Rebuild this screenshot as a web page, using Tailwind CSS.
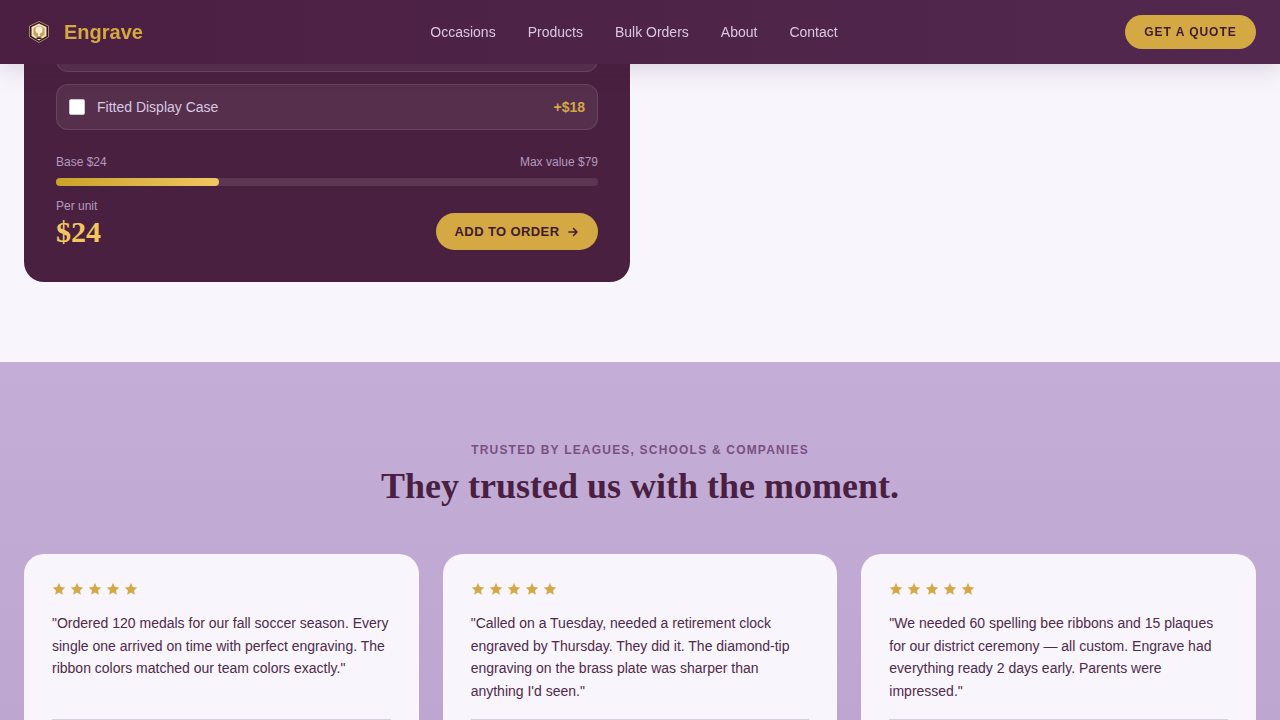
<!DOCTYPE html>
<html lang="en">
<head>
  <meta charset="UTF-8" />
  <title>Engrave</title>
  <script src="https://cdn.jsdelivr.net/npm/@tailwindcss/browser@4"></script>
</head>
<body class="h-screen overflow-hidden bg-[#f8f5fc] font-['Liberation_Sans',sans-serif]">
  <!-- Nav -->
  <header class="fixed top-0 left-0 z-50 w-full h-16 flex items-center justify-between px-6 bg-gradient-to-r from-[#4a1f42] to-[#52284f] shadow-[0_4px_24px_rgba(74,31,66,0.18)]">
    <div class="flex items-center gap-[10px]">
      <svg class="w-[30px] h-[30px]" viewBox="0 0 30 30" fill="none">
        <path d="M15 4.500 L24.500 9 V20 L15 25.500 L5.500 20 V9 Z" fill="#2f1626" stroke="#a98a5c" stroke-width="1"/>
        <path d="M15 6.500 L22.500 10 V19 L15 23.500 L7.500 19 V10 Z" fill="#f2e4c4"/>
        <path d="M15 8.500 L20.500 11 V18 L15 21.500 L9.500 18 V11 Z" fill="#c9a25a"/>
        <circle cx="15" cy="13" r="3.500" fill="#f7edd4"/>
        <path d="M14 15h2v4h-2z" fill="#f7edd4"/>
        <path d="M12.500 20.500h5v1.500h-5z" fill="#2f1626"/>
      </svg>
      <span class="text-[20px] font-bold text-[#d4a843]">Engrave</span>
    </div>
    <nav class="flex items-center gap-8 text-[14px] text-[#d9c9e0]">
      <a>Occasions</a>
      <a>Products</a>
      <a>Bulk Orders</a>
      <a>About</a>
      <a>Contact</a>
    </nav>
    <button class="w-[131px] h-[34px] rounded-full bg-[#d4a843] text-[12px] font-bold tracking-[0.08em] text-[#3f1a2e]">GET A QUOTE</button>
  </header>

  <!-- Configurator -->
  <section class="h-[362px] px-6">
    <div class="w-[606px] h-[282px] pt-[26px] px-8 bg-[#4a2040] rounded-b-[20px]">
      <div class="h-[46px] rounded-xl bg-white/[0.07] border border-white/10"></div>
      <label class="mt-3 h-[46px] px-3 flex items-center justify-between rounded-xl bg-white/[0.07] border border-white/10">
        <span class="flex items-center gap-3 text-[14px] text-[#d9c9e0]">
          <span class="w-4 h-4 bg-white rounded-[2px] border border-[#cfc6d4]"></span>
          Fitted Display Case
        </span>
        <span class="text-[14px] font-bold text-[#d4a843]">+$18</span>
      </label>
      <div class="mt-[23px] flex justify-between text-[12px] text-[#b39bbf]">
        <span>Base $24</span>
        <span>Max value $79</span>
      </div>
      <div class="mt-[7px] h-2 rounded-full bg-white/10">
        <div class="h-2 w-[163px] rounded-full bg-gradient-to-r from-[#c9a227] to-[#f0c860]"></div>
      </div>
      <div class="mt-[11px] flex items-end justify-between">
        <div>
          <div class="text-[12px] text-[#b39bbf]">Per unit</div>
          <div class="font-['Liberation_Serif',serif] text-[30px] leading-[33px] pb-[2px] font-bold text-[#f0c860]">$24</div>
        </div>
        <button class="w-[162px] h-[37px] flex items-center justify-center gap-2 rounded-full bg-[#d4a843] text-[13px] font-bold tracking-[0.03em] text-[#3f1a2e]">
          ADD TO ORDER
          <svg class="w-3 h-3" viewBox="0 0 24 24" fill="none" stroke="currentColor" stroke-width="3" stroke-linecap="round" stroke-linejoin="round"><path d="M4 12h16M13 5l7 7-7 7"/></svg>
        </button>
      </div>
    </div>
  </section>

  <!-- Testimonials -->
  <section class="h-[358px] px-6 pt-20 bg-gradient-to-b from-[#c4aed8] to-[#bda7d1]">
    <div class="text-center">
      <div class="text-[12px] leading-4 font-bold tracking-[0.1em] text-[#7a4f80]">TRUSTED BY LEAGUES, SCHOOLS &amp; COMPANIES</div>
      <h2 class="mt-[6px] font-['Liberation_Serif',serif] text-[36px] leading-[44px] font-bold text-[#4a1f42]">They trusted us with the moment.</h2>
    </div>
    <div class="mt-[46px] grid grid-cols-3 gap-6">
      <article class="h-[240px] px-7 pt-7 rounded-[20px] bg-[#f8f5fc]">
        <div class="flex gap-1 text-[#d4a843]">
          <svg class="w-[14px] h-[14px]" viewBox="0 0 24 24" fill="currentColor"><path d="M12 1.500l3.200 6.900 7.500.9-5.600 5.100 1.500 7.400L12 18.100l-6.600 3.700 1.500-7.400L1.300 9.300l7.500-.9z"/></svg>
          <svg class="w-[14px] h-[14px]" viewBox="0 0 24 24" fill="currentColor"><path d="M12 1.500l3.200 6.900 7.500.9-5.600 5.100 1.500 7.400L12 18.100l-6.600 3.700 1.500-7.400L1.300 9.300l7.500-.9z"/></svg>
          <svg class="w-[14px] h-[14px]" viewBox="0 0 24 24" fill="currentColor"><path d="M12 1.500l3.200 6.900 7.500.9-5.600 5.100 1.500 7.400L12 18.100l-6.600 3.700 1.500-7.400L1.300 9.300l7.500-.9z"/></svg>
          <svg class="w-[14px] h-[14px]" viewBox="0 0 24 24" fill="currentColor"><path d="M12 1.500l3.200 6.900 7.500.9-5.600 5.100 1.500 7.400L12 18.100l-6.600 3.700 1.500-7.400L1.300 9.300l7.500-.9z"/></svg>
          <svg class="w-[14px] h-[14px]" viewBox="0 0 24 24" fill="currentColor"><path d="M12 1.500l3.200 6.900 7.500.9-5.600 5.100 1.500 7.400L12 18.100l-6.600 3.700 1.500-7.400L1.300 9.300l7.500-.9z"/></svg>
        </div>
        <p class="mt-4 h-[90px] text-[14px] leading-[22.6px] text-[#4f2a4a]">"Ordered 120 medals for our fall soccer season. Every single one arrived on time with perfect engraving. The ribbon colors matched our team colors exactly."</p>
        <div class="mt-[17px] border-t border-[#d9cfe2]"></div>
      </article>
      <article class="h-[240px] px-7 pt-7 rounded-[20px] bg-[#f8f5fc]">
        <div class="flex gap-1 text-[#d4a843]">
          <svg class="w-[14px] h-[14px]" viewBox="0 0 24 24" fill="currentColor"><path d="M12 1.500l3.200 6.900 7.500.9-5.600 5.100 1.500 7.400L12 18.100l-6.600 3.700 1.500-7.400L1.300 9.300l7.500-.9z"/></svg>
          <svg class="w-[14px] h-[14px]" viewBox="0 0 24 24" fill="currentColor"><path d="M12 1.500l3.200 6.900 7.500.9-5.600 5.100 1.500 7.400L12 18.100l-6.600 3.700 1.500-7.400L1.300 9.300l7.500-.9z"/></svg>
          <svg class="w-[14px] h-[14px]" viewBox="0 0 24 24" fill="currentColor"><path d="M12 1.500l3.200 6.900 7.500.9-5.600 5.100 1.500 7.400L12 18.100l-6.600 3.700 1.500-7.400L1.300 9.300l7.500-.9z"/></svg>
          <svg class="w-[14px] h-[14px]" viewBox="0 0 24 24" fill="currentColor"><path d="M12 1.500l3.200 6.900 7.500.9-5.600 5.100 1.500 7.400L12 18.100l-6.600 3.700 1.500-7.400L1.300 9.300l7.500-.9z"/></svg>
          <svg class="w-[14px] h-[14px]" viewBox="0 0 24 24" fill="currentColor"><path d="M12 1.500l3.200 6.900 7.500.9-5.600 5.100 1.500 7.400L12 18.100l-6.600 3.700 1.500-7.400L1.300 9.300l7.500-.9z"/></svg>
        </div>
        <p class="mt-4 h-[90px] text-[14px] leading-[22.6px] text-[#4f2a4a]">"Called on a Tuesday, needed a retirement clock engraved by Thursday. They did it. The diamond-tip engraving on the brass plate was sharper than anything I'd seen."</p>
        <div class="mt-[17px] border-t border-[#d9cfe2]"></div>
      </article>
      <article class="h-[240px] px-7 pt-7 rounded-[20px] bg-[#f8f5fc]">
        <div class="flex gap-1 text-[#d4a843]">
          <svg class="w-[14px] h-[14px]" viewBox="0 0 24 24" fill="currentColor"><path d="M12 1.500l3.200 6.900 7.500.9-5.600 5.100 1.500 7.400L12 18.100l-6.600 3.700 1.500-7.400L1.300 9.300l7.500-.9z"/></svg>
          <svg class="w-[14px] h-[14px]" viewBox="0 0 24 24" fill="currentColor"><path d="M12 1.500l3.200 6.900 7.500.9-5.600 5.100 1.500 7.400L12 18.100l-6.600 3.700 1.500-7.400L1.300 9.300l7.500-.9z"/></svg>
          <svg class="w-[14px] h-[14px]" viewBox="0 0 24 24" fill="currentColor"><path d="M12 1.500l3.200 6.900 7.500.9-5.600 5.100 1.500 7.400L12 18.100l-6.600 3.700 1.500-7.400L1.300 9.300l7.500-.9z"/></svg>
          <svg class="w-[14px] h-[14px]" viewBox="0 0 24 24" fill="currentColor"><path d="M12 1.500l3.200 6.900 7.500.9-5.600 5.100 1.500 7.400L12 18.100l-6.600 3.700 1.500-7.400L1.300 9.300l7.500-.9z"/></svg>
          <svg class="w-[14px] h-[14px]" viewBox="0 0 24 24" fill="currentColor"><path d="M12 1.500l3.200 6.900 7.500.9-5.600 5.100 1.500 7.400L12 18.100l-6.600 3.700 1.500-7.400L1.300 9.300l7.500-.9z"/></svg>
        </div>
        <p class="mt-4 h-[90px] text-[14px] leading-[22.6px] text-[#4f2a4a]">"We needed 60 spelling bee ribbons and 15 plaques for our district ceremony — all custom. Engrave had everything ready 2 days early. Parents were impressed."</p>
        <div class="mt-[17px] border-t border-[#d9cfe2]"></div>
      </article>
    </div>
  </section>
</body>
</html>
